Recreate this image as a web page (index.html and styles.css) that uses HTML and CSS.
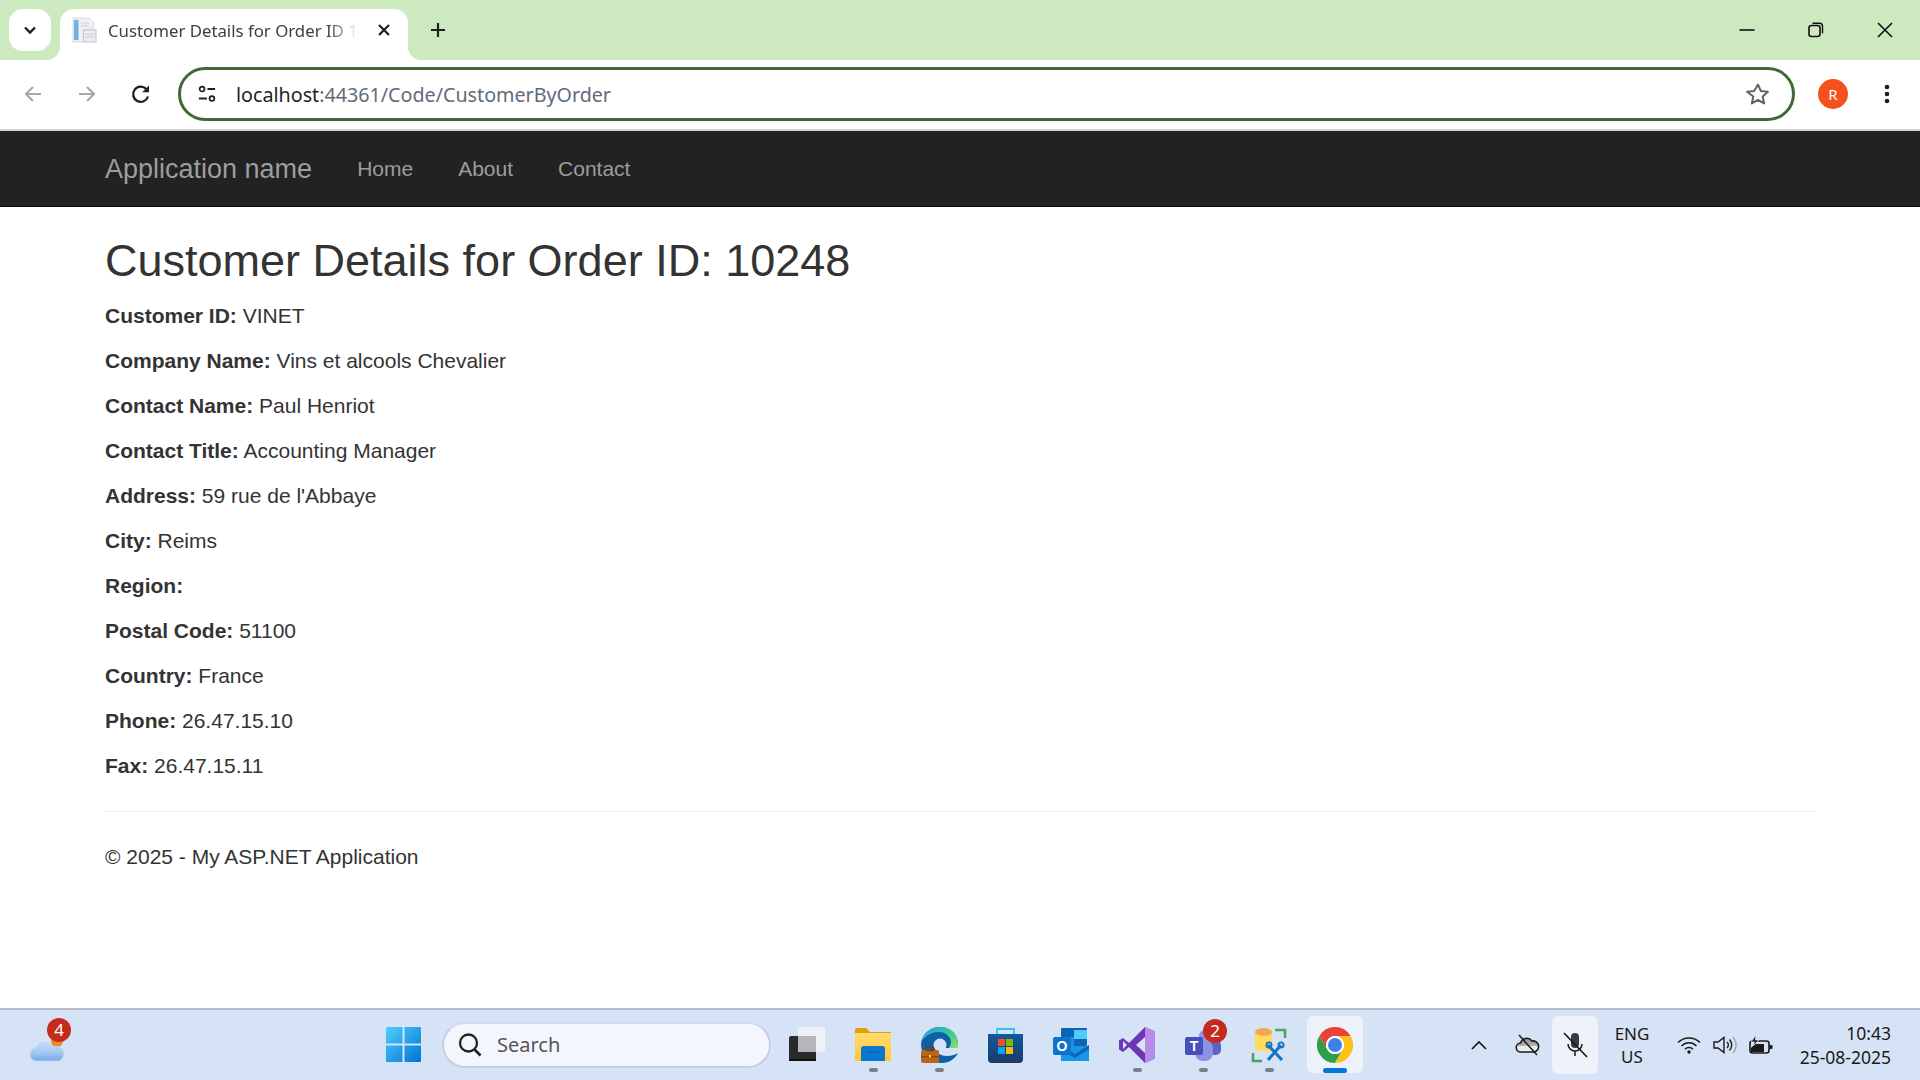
FILE: index.html
```html
<!DOCTYPE html>
<html lang="en">
<head>
<meta charset="utf-8">
<title>Customer Details for Order ID 10248</title>
<link rel="stylesheet" href="styles.css">
</head>
<body>
<div class="browser">
  <div class="tabstrip">
    <div class="tabsearch"><svg width="16" height="16" viewBox="0 0 16 16"><path d="M3 5.500l5 5 5-5" fill="none" stroke="#1f1f1f" stroke-width="2.400"/></svg></div>
    <div class="tab">
      <svg class="favicon" width="25" height="26" viewBox="0 0 25 26"><path d="M1 1h16l5 5v7H12v12H1z" fill="#eef0f3" stroke="#d5d9de"/><rect x="2" y="3" width="4.500" height="20" fill="#6eb2ea"/><rect x="11.500" y="13" width="12.500" height="12" fill="#eceef1" stroke="#bcc3cb"/><path d="M13 17h9.500M13 20h9.500M9 6h8M9 9h8" stroke="#c8cdd4"/></svg>
      <span class="tabtitle">Customer Details for Order ID 10248</span>
      <svg class="tabclose" width="14" height="14" viewBox="0 0 14 14"><path d="M2 2l10 10M12 2L2 12" stroke="#1f1f1f" stroke-width="2.200"/></svg>
    </div>
    <svg class="newtab" width="18" height="18" viewBox="0 0 18 18"><path d="M9 2v14M2 9h14" stroke="#1f1f1f" stroke-width="2.200"/></svg>
    <div class="winctl">
      <svg width="16" height="16" viewBox="0 0 16 16"><path d="M0.500 8h15" stroke="#111" stroke-width="1.600"/></svg>
      <svg width="16" height="16" viewBox="0 0 16 16"><rect x="1" y="3.500" width="11" height="11" rx="2.500" fill="none" stroke="#111" stroke-width="1.600"/><path d="M4.500 1.200h7a3 3 0 0 1 3 3v7" fill="none" stroke="#111" stroke-width="1.400"/></svg>
      <svg width="16" height="16" viewBox="0 0 16 16"><path d="M1 1l14 14M15 1L1 15" stroke="#111" stroke-width="1.600"/></svg>
    </div>
  </div>
  <div class="toolbar">
    <div class="navbtns">
      <svg width="22" height="22" viewBox="0 0 22 22"><path d="M19 11H4M11 4l-7 7 7 7" fill="none" stroke="#a6a8aa" stroke-width="2.200"/></svg>
      <svg width="22" height="22" viewBox="0 0 22 22"><path d="M3 11h15M11 4l7 7-7 7" fill="none" stroke="#a6a8aa" stroke-width="2.200"/></svg>
      <svg width="22" height="22" viewBox="0 0 22 22"><path d="M18 13.500A7.600 7.600 0 1 1 16.300 6" fill="none" stroke="#1f1f1f" stroke-width="2.300"/><path d="M19 2.500v6.800h-6.800z" fill="#1f1f1f"/></svg>
    </div>
    <div class="omnibox">
      <svg class="tune" width="18" height="18" viewBox="0 0 20 20"><circle cx="4.500" cy="4.500" r="2.700" fill="none" stroke="#1f1f1f" stroke-width="1.900"/><path d="M10.500 4.500H19M1 15h9" stroke="#1f1f1f" stroke-width="2.100"/><circle cx="15.500" cy="15" r="2.700" fill="none" stroke="#1f1f1f" stroke-width="1.900"/></svg>
      <div class="url"><span class="host">localhost</span>:44361/Code/CustomerByOrder</div>
      <svg class="star" width="24" height="24" viewBox="0 0 24 24"><path d="M12 2.600l2.900 6.400 7 .8-5.200 4.700 1.400 6.900-6.100-3.500-6.100 3.500 1.400-6.900L1.100 9.800l7-.8z" fill="none" stroke="#5f6368" stroke-width="2" stroke-linejoin="round"/></svg>
    </div>
    <div class="avatar">R</div>
    <svg class="menu" width="6" height="22" viewBox="0 0 6 22"><circle cx="3" cy="4" r="2.300"/><circle cx="3" cy="11" r="2.300"/><circle cx="3" cy="18" r="2.300"/></svg>
  </div>
</div>

<nav class="navbar">
  <a class="brand">Application name</a>
  <a class="navlink">Home</a>
  <a class="navlink">About</a>
  <a class="navlink">Contact</a>
</nav>

<main class="content">
  <h2 class="heading">Customer Details for Order ID: 10248</h2>
  <p><strong>Customer ID:</strong> VINET</p>
  <p><strong>Company Name:</strong> Vins et alcools Chevalier</p>
  <p><strong>Contact Name:</strong> Paul Henriot</p>
  <p><strong>Contact Title:</strong> Accounting Manager</p>
  <p><strong>Address:</strong> 59 rue de l'Abbaye</p>
  <p><strong>City:</strong> Reims</p>
  <p><strong>Region:</strong></p>
  <p><strong>Postal Code:</strong> 51100</p>
  <p><strong>Country:</strong> France</p>
  <p><strong>Phone:</strong> 26.47.15.10</p>
  <p><strong>Fax:</strong> 26.47.15.11</p>
  <hr class="rule">
  <footer><p>© 2025 - My ASP.NET Application</p></footer>
</main>

<div class="taskbar">
  <div class="weather">
    <svg width="36" height="28" viewBox="0 0 36 28"><defs><linearGradient id="cl" x1="0" y1="0" x2="0" y2="1"><stop offset="0" stop-color="#c4dcf8"/><stop offset=".6" stop-color="#9cc4f2"/><stop offset="1" stop-color="#74a9e8"/></linearGradient></defs><circle cx="27" cy="7" r="6" fill="#f08a24"/><path d="M7 27a6.500 6.500 0 0 1-1-13 8 8 0 0 1 8-5 9 9 0 0 1 9 4 7 7 0 0 1 6 14z" fill="url(#cl)" stroke="#b6d3f5"/></svg>
    <span class="badge weatherbadge">4</span>
  </div>
  <div class="center">
    <div class="cell"><svg width="35" height="35" viewBox="0 0 35 35"><defs><linearGradient id="w" x1="0" y1="0" x2="1" y2="1"><stop offset="0" stop-color="#4fd0fb"/><stop offset="1" stop-color="#0073d6"/></linearGradient></defs><path d="M0 1q0-1 1-1h15.500v16.500H0zM18.500 0H34q1 0 1 1v15.500H18.500zM0 18.500h16.500V35H1q-1 0-1-1zM18.500 18.500H35V34q0 1-1 1H18.500z" fill="url(#w)"/></svg></div>
    <div class="searchbox">
      <svg width="26" height="26" viewBox="0 0 26 26"><circle cx="11.500" cy="11" r="8.500" fill="none" stroke="#222" stroke-width="2.300"/><path d="M17.500 17.500l6 6" stroke="#222" stroke-width="2.600"/></svg>
      <span>Search</span>
    </div>
    <div class="cell">
      <svg width="37" height="35" viewBox="0 0 37 35"><rect x="0" y="9" width="27" height="25" rx="2" fill="#2a2a2a"/><rect x="0" y="32" width="27" height="2" fill="#111"/><rect x="9" y="0" width="27" height="25" rx="2" fill="#f2f3f5" fill-opacity=".85"/><rect x="9" y="9" width="18" height="16" fill="#b4b6b9"/></svg>
    </div>
    <div class="cell open">
      <svg width="36" height="35" viewBox="0 0 36 35"><defs><linearGradient id="f" x1="0" y1="0" x2="0" y2="1"><stop offset="0" stop-color="#ffdb70"/><stop offset="1" stop-color="#ffc733"/></linearGradient></defs><path d="M0 3q0-2 2-2h9l4 4h21v28H0z" fill="#e0a10a"/><path d="M0 6h36v27q0 1-1 1H1q-1 0-1-1z" fill="url(#f)"/><path d="M6 34V22q0-3 3-3h18q3 0 3 3v12z" fill="#0a78d0"/><path d="M12 25h12" stroke="#0a5ea8" stroke-width="1.500"/></svg>
    </div>
    <div class="cell open">
      <svg width="37" height="36" viewBox="0 0 37 36"><defs><linearGradient id="e" x1="0" y1="0" x2="1" y2="1"><stop offset="0" stop-color="#1aa3e0"/><stop offset=".6" stop-color="#3fd08a"/><stop offset="1" stop-color="#8ee06a"/></linearGradient></defs><path d="M0 17C1 6 10 0 19 0c10 0 18 7 18 17v4H15c0 5 5 8 11 8 4 0 8-1 11-3-3 6-9 10-16 10C9 36 0 29 0 17z" fill="#0d5fa8"/><path d="M1 14C3 5 11 0 19 0c10 0 18 7 18 17v4h-9c1-2 2-4 2-6 0-5-5-10-12-10C11 5 5 8 1 14z" fill="url(#e)"/><circle cx="19" cy="18" r="6.500" fill="#d6e2f5"/><rect x="0" y="23" width="18" height="13" rx="2" fill="#b9661a"/><rect x="0" y="29" width="18" height="1.500" fill="#8a4a10"/><rect x="6" y="20" width="6" height="3.500" fill="none" stroke="#7a3f10" stroke-width="1.500"/><rect x="8" y="28" width="2" height="2.500" fill="#ffd24d"/></svg>
    </div>
    <div class="cell">
      <svg width="35" height="36" viewBox="0 0 35 36"><defs><linearGradient id="s" x1="0" y1="0" x2="0" y2="1"><stop offset="0" stop-color="#0f5aa0"/><stop offset="1" stop-color="#1c3a68"/></linearGradient></defs><path d="M9 7V2h17v5" fill="none" stroke="#2fc3ee" stroke-width="1.800"/><path d="M0 7h35v25q0 4-4 4H4q-4 0-4-4z" fill="url(#s)"/><rect x="10" y="12" width="7" height="7" fill="#f25022"/><rect x="18" y="12" width="7" height="7" fill="#7fba00"/><rect x="10" y="20" width="7" height="7" fill="#00a4ef"/><rect x="18" y="20" width="7" height="7" fill="#ffb900"/></svg>
    </div>
    <div class="cell">
      <svg width="36" height="34" viewBox="0 0 36 34"><rect x="8" y="0" width="26" height="18" rx="1" fill="#0a64b8"/><rect x="21" y="2" width="13" height="9" fill="#4fcdf7"/><rect x="8" y="9" width="13" height="9" fill="#1f8fe0"/><path d="M8 18h28v15H8z" fill="#1796e6"/><path d="M8 17l14 9 14-9v4L22 30 8 21z" fill="#0a64b8"/><rect x="0" y="9" width="18" height="18" rx="2" fill="#0f72cc"/><text x="9" y="23" class="glyph">O</text></svg>
    </div>
    <div class="cell open">
      <svg width="36" height="36" viewBox="0 0 36 36"><path d="M26 0l10 4.500v27L26 36 10 20l-6 5-4-2.500v-9L4 11l6 5z" fill="#6e35b5"/><path d="M26 0l10 4.500v27L26 36z" fill="#b78be8"/><path d="M4 14v8l4-4zM26 10v16l-9-8z" fill="#d6e2f5"/></svg>
    </div>
    <div class="cell open">
      <svg width="36" height="32" viewBox="0 0 36 32"><circle cx="30" cy="9" r="5" fill="#7a83d6"/><rect x="24" y="11" width="12" height="15" rx="5" fill="#5b64c6"/><circle cx="20" cy="7" r="6" fill="#8b93e2"/><rect x="10" y="11" width="18" height="21" rx="8" fill="#8b93e2"/><rect x="0" y="8" width="18" height="18" rx="2" fill="#4650b8"/><text x="9" y="22" class="glyph">T</text></svg>
      <span class="badge teamsbadge">2</span>
    </div>
    <div class="cell open">
      <svg width="36" height="36" viewBox="0 0 36 36"><rect x="4" y="2" width="17" height="22" rx="2" fill="#ffdc5c"/><ellipse cx="12.500" cy="5" rx="8.500" ry="4" fill="#f2a65a"/><path d="M24 3h10v8M2 26v8h9" fill="none" stroke="#4aa564" stroke-width="2.600"/><path d="M17 33l13-15M31 33L17 18" stroke="#1273c4" stroke-width="3"/><circle cx="18" cy="18" r="2.600" fill="none" stroke="#1273c4" stroke-width="1.800"/><circle cx="30" cy="18" r="2.600" fill="none" stroke="#1273c4" stroke-width="1.800"/></svg>
    </div>
    <div class="cell active">
      <svg width="36" height="36" viewBox="0 0 36 36"><path d="M18 0A18 18 0 0 1 33.600 9H18A9 9 0 0 0 10.200 22.500L2.400 9A18 18 0 0 1 18 0z" fill="#ea4335"/><path d="M2.400 9L10.200 22.500A9 9 0 0 0 25.800 22.500L18 36A18 18 0 0 1 2.400 9z" fill="#2f9e4b"/><path d="M33.600 9H18A9 9 0 0 1 25.800 22.500L18 36A18 18 0 0 0 33.600 9z" fill="#fbc116"/><circle cx="18" cy="18" r="9" fill="#fff"/><circle cx="18" cy="18" r="7" fill="#3f7fe8"/></svg>
    </div>
  </div>
  <div class="tray">
    <svg class="caret" width="16" height="10" viewBox="0 0 16 10"><path d="M1 9l7-7 7 7" fill="none" stroke="#1a1a1a" stroke-width="1.700"/></svg>
    <svg class="onedrive" width="25" height="22" viewBox="0 0 25 22"><defs><linearGradient id="od" x1="0" y1="0" x2="0" y2="1"><stop offset="0" stop-color="#8a8a8a"/><stop offset=".55" stop-color="#b5b5b5"/><stop offset=".6" stop-color="#e8e8e8"/><stop offset="1" stop-color="#f2f2f2"/></linearGradient></defs><path d="M6 18a4.500 4.500 0 0 1-.500-9 6.500 6.500 0 0 1 11.500-2 5.500 5.500 0 0 1 2 11z" fill="url(#od)" stroke="#1a1a1a" stroke-width="1.600"/><path d="M4 1l18 20" stroke="#1a1a1a" stroke-width="1.500"/></svg>
    <div class="mic">
      <svg width="26" height="26" viewBox="0 0 26 26"><rect x="9" y="1" width="8" height="15" rx="4" fill="#3a3a3a"/><path d="M6 12a7 7 0 0 0 14 0M13 19v5" fill="none" stroke="#1a1a1a" stroke-width="1.500"/><path d="M2 1l23 24" stroke="#1a1a1a" stroke-width="1.700"/></svg>
    </div>
    <div class="lang"><span>ENG</span><span>US</span></div>
    <div class="status">
      <svg width="24" height="18" viewBox="0 0 24 18"><path d="M1 6.500a15.500 15.500 0 0 1 22 0M4.500 10a10.500 10.500 0 0 1 15 0M8 13.200a5.500 5.500 0 0 1 8 0" fill="none" stroke="#1a1a1a" stroke-width="1.500"/><circle cx="12" cy="16" r="1.700" fill="#1a1a1a"/></svg>
      <svg width="24" height="20" viewBox="0 0 24 20"><path d="M1 7h4l6-4.500v15L5 13H1z" fill="none" stroke="#1a1a1a" stroke-width="1.400"/><path d="M14 7a4 4 0 0 1 0 6M16.500 4.500a8 8 0 0 1 0 11" fill="none" stroke="#1a1a1a" stroke-width="1.400"/><path d="M20 2a12 12 0 0 1 0 16" fill="none" stroke="#a8a8a8" stroke-width="1.400"/></svg>
      <svg width="24" height="20" viewBox="0 0 24 20"><rect x="1" y="6" width="19" height="12" rx="2.500" fill="#d6e2f5" stroke="#1a1a1a" stroke-width="1.600"/><path d="M2 13l4-4h9v8H2z" fill="#1a1a1a"/><rect x="20.500" y="10" width="3" height="4" rx="1" fill="#1a1a1a"/><path d="M7 0L2 7h3.500L4 11l6-6H6.500z" fill="#1a1a1a" stroke="#d6e2f5" stroke-width=".8"/></svg>
    </div>
    <div class="clock"><span>10:43</span><span>25-08-2025</span></div>
  </div>
</div>
</body>
</html>
```

FILE: styles.css
```css
* { box-sizing: border-box; }
html, body { margin: 0; height: 100%; }
body {
  width: 1920px;
  height: 1080px;
  overflow: hidden;
  display: flex;
  flex-direction: column;
  background: #fff;
  font-family: "Liberation Sans", Arial, sans-serif;
  font-size: 21px;
  line-height: 30px;
  color: #333;
}
.tabstrip {
  height: 60px;
  background: #cce9c0;
  display: flex;
  align-items: flex-end;
  padding-left: 9px;
  position: relative;
}
.tabsearch {
  width: 42px;
  height: 42px;
  margin-bottom: 9px;
  border-radius: 14px;
  background: #fff;
  display: flex;
  align-items: center;
  justify-content: center;
}
.tab {
  margin-left: 9px;
  width: 348px;
  height: 51px;
  background: #fff;
  border-radius: 14px 14px 0 0;
  display: flex;
  align-items: center;
  padding: 0 0 9px 12px;
  position: relative;
}
.tab::before, .tab::after {
  content: "";
  position: absolute;
  bottom: 0;
  width: 14px;
  height: 14px;
}
.tab::before { left: -14px; background: radial-gradient(circle at 0 0, #cce9c0 14px, #fff 14.500px); }
.tab::after { right: -14px; background: radial-gradient(circle at 100% 0, #cce9c0 14px, #fff 14.500px); }
.favicon { flex: none; }
.tabtitle {
  margin: 2px 0 0 11px;
  width: 250px;
  flex: none;
  white-space: nowrap;
  overflow: hidden;
  font-family: "Noto Sans", "Open Sans", sans-serif;
  font-size: 16.800px;
  line-height: 24px;
  color: #3c4043;
  -webkit-mask-image: linear-gradient(to right, #000 88%, transparent);
  mask-image: linear-gradient(to right, #000 88%, transparent);
}
.tabclose { margin-left: 19px; flex: none; }
.newtab { margin: 0 0 21px 21px; flex: none; }
.winctl {
  margin-left: auto;
  display: flex;
  gap: 53px;
  padding: 0 27px 22px 0;
}
.toolbar {
  height: 71px;
  background: #fff;
  border-bottom: 2px solid #d4d4d4;
  border-radius: 12px 12px 0 0;
  display: flex;
  align-items: center;
  padding: 0 0 2px 22px;
}
.navbtns { display: flex; gap: 32px; }
.omnibox {
  margin-left: 26px;
  width: 1617px;
  height: 54px;
  border: 3px solid #3f6a35;
  border-radius: 27px;
  display: flex;
  align-items: center;
  padding: 0 22px 0 17px;
}
.tune { flex: none; }
.url {
  margin-left: 20px;
  padding-top: 2px;
  font-family: "Noto Sans", "Open Sans", sans-serif;
  font-size: 19.700px;
  color: #5f6b7a;
  white-space: nowrap;
}
.host { color: #1f1f1f; }
.star { margin-left: auto; }
.avatar {
  margin-left: 23px;
  width: 30px;
  height: 30px;
  border-radius: 50%;
  background: #f4511e;
  color: #fff;
  font-family: "Noto Sans", sans-serif;
  font-size: 15px;
  line-height: 30px;
  text-align: center;
  flex: none;
}
.menu { margin-left: 36px; fill: #1f1f1f; flex: none; }

.navbar {
  height: 76px;
  background: #222;
  border-bottom: 1px solid #080808;
  display: flex;
  align-items: center;
  padding: 0 105px;
  flex: none;
}
.brand { font-size: 27px; color: #9d9d9d; margin-right: 45px; }
.navlink { font-size: 21px; color: #9d9d9d; margin-right: 45px; }

.content { flex: 1; padding: 0 105px; min-height: 0; }
.heading {
  margin: 29px 0 15px;
  font-size: 45px;
  line-height: 49.500px;
  font-weight: 500;
}
.content p { margin: 0 0 15px; }
.rule { margin: 30px 0 30px; border: 0; border-top: 1px solid #eee; }

.taskbar {
  height: 72px;
  flex: none;
  background: #d6e2f5;
  border-top: 2px solid #b4bac8;
  padding-bottom: 1px;
  display: flex;
  align-items: center;
  position: relative;
  font-family: "Noto Sans", "Open Sans", sans-serif;
  color: #1a1a1a;
}
.weather {
  width: 36px;
  height: 28px;
  margin: 6px 0 0 30px;
  position: relative;
  flex: none;
}
.badge {
  position: absolute;
  border-radius: 50%;
  background: #c42b1c;
  color: #fff;
  font-size: 17px;
  text-align: center;
}
.weatherbadge { left: 17px; top: -16px; width: 24px; height: 24px; line-height: 24px; }
.center {
  margin-left: 304px;
  display: flex;
  align-items: center;
  flex: none;
}
.cell {
  width: 66px;
  height: 57px;
  display: flex;
  align-items: center;
  justify-content: center;
  position: relative;
}
.cell.open::after {
  content: "";
  position: absolute;
  bottom: 1px;
  left: 29px;
  width: 9px;
  height: 4px;
  border-radius: 2px;
  background: #7a7f88;
}
.cell.active { background: #edf2fb; border-radius: 6px; width: 56px; margin-left: 5px; }
.cell.active::after {
  content: "";
  position: absolute;
  bottom: 0;
  left: 16px;
  width: 24px;
  height: 5px;
  border-radius: 3px;
  background: #0078d4;
}
.teamsbadge { left: 33px; top: 3px; width: 24px; height: 24px; line-height: 24px; }
.searchbox {
  width: 329px;
  height: 46px;
  margin: 0 3px 0 6px;
  border-radius: 23px;
  background: #f3f6fd;
  border: 2px solid #c4cfe2;
  border-top-color: #d0dbee;
  display: flex;
  align-items: center;
  padding-left: 13px;
  gap: 14px;
  color: #555;
  font-size: 20px;
  flex: none;
}
.tray {
  margin-left: auto;
  padding-right: 29px;
  display: flex;
  align-items: center;
  flex: none;
}
.caret { flex: none; }
.onedrive { margin-left: 28px; flex: none; }
.mic {
  margin-left: 12px;
  width: 46px;
  height: 58px;
  border-radius: 6px;
  background: #edf2fb;
  display: flex;
  align-items: center;
  justify-content: center;
}
.lang {
  width: 68px;
  display: flex;
  flex-direction: column;
  align-items: center;
  font-size: 17px;
  line-height: 23px;
}
.status { margin-left: 11px; display: flex; gap: 12px; align-items: center; }
.clock {
  margin-left: 8px;
  width: 110px;
  display: flex;
  flex-direction: column;
  align-items: flex-end;
  font-size: 17.500px;
  line-height: 24px;
}
.glyph {
  font-family: "Liberation Sans", sans-serif;
  font-weight: 700;
  font-size: 14px;
  fill: #fff;
  text-anchor: middle;
}
```
